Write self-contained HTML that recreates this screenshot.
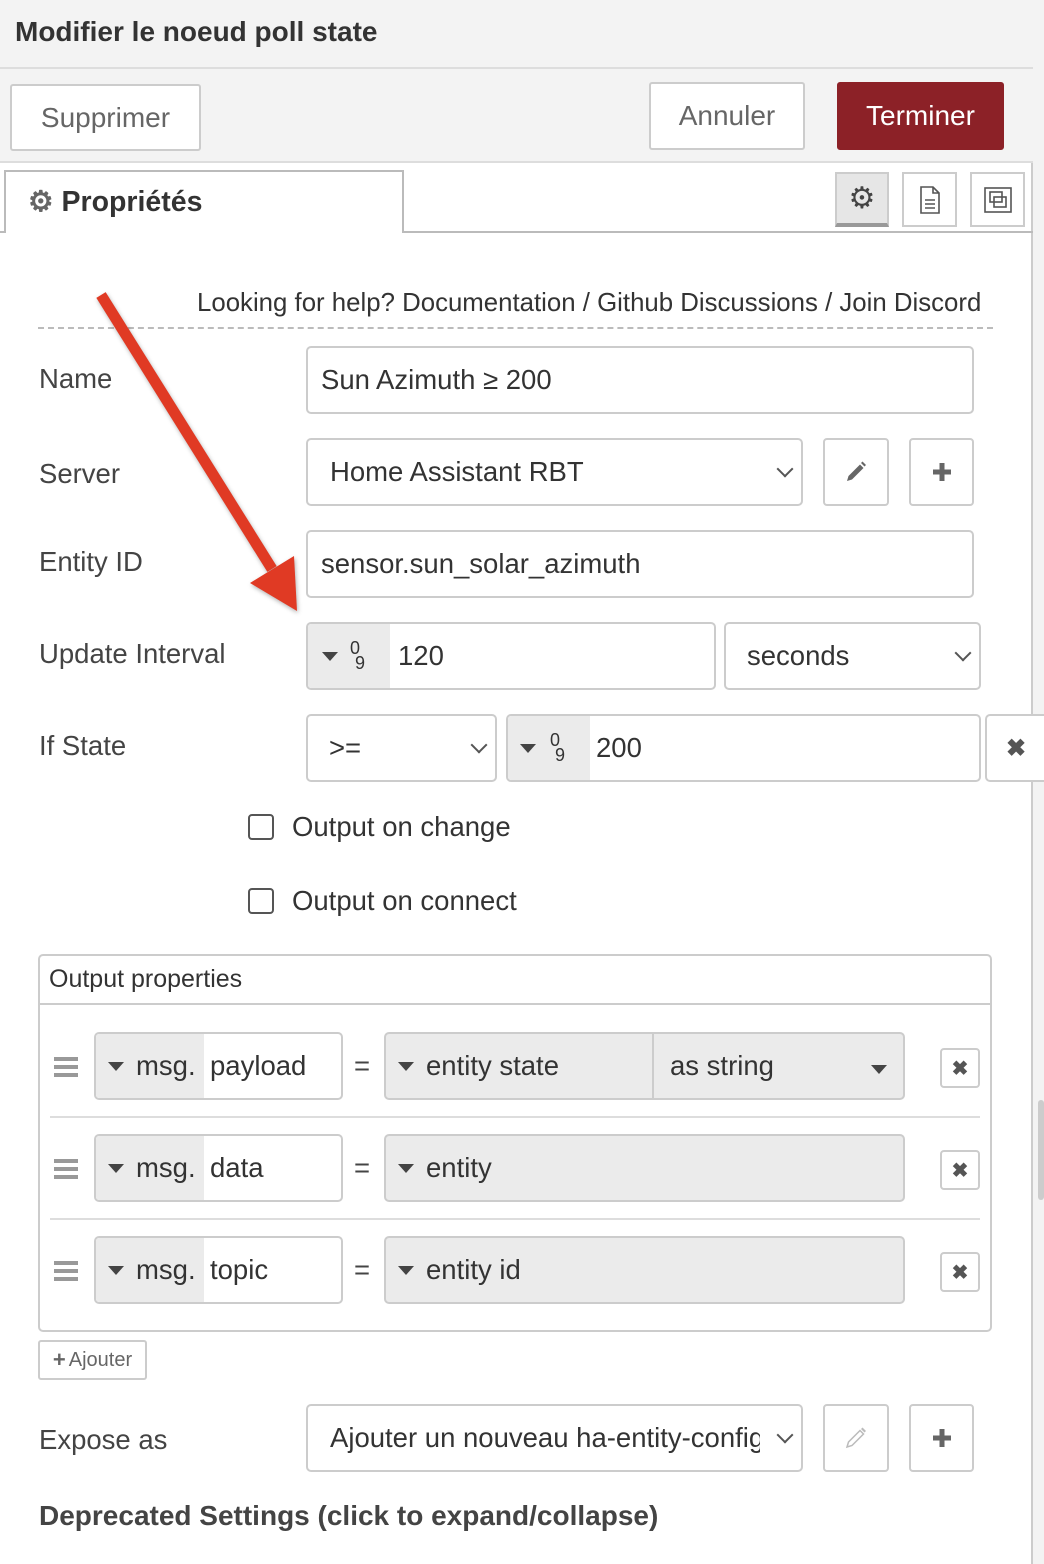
<!DOCTYPE html>
<html><head><meta charset="utf-8"><style>
*{box-sizing:border-box}
body{margin:0;width:1044px;height:1564px;overflow:hidden;background:#f3f3f3;font-family:"Liberation Sans",sans-serif;color:#444;position:relative}
.a{position:absolute}
.panel{left:0;top:0;width:1033px;height:1564px;background:#fff;border-right:2px solid #ccc}
.hdr{left:0;top:0;width:1033px;height:69px;background:#f3f3f3;border-bottom:2px solid #ddd}
.bar{left:0;top:69px;width:1033px;height:94px;background:#f3f3f3;border-bottom:2px solid #ddd}
.btn{border:2px solid #ccc;background:#fff;border-radius:3px;display:flex;align-items:center;justify-content:center;font-size:28px;color:#666}
.inp{border:2px solid #ccc;border-radius:5px;background:#fff;font-size:27.5px;color:#333;display:flex;align-items:center}
.lbl{font-size:27.5px;color:#444}
.sq{border:2px solid #ccc;border-radius:4px;background:#fff;display:flex;align-items:center;justify-content:center}
.chev{position:absolute;right:10px;top:50%;width:12px;height:12px;border-right:2px solid #555;border-bottom:2px solid #555;transform:translateY(-75%) rotate(45deg)}
.tri{display:inline-block;width:0;height:0;border-left:8px solid transparent;border-right:8px solid transparent;border-top:9px solid #444}
.grey{background:#ebebeb}
.hamb{width:24px;height:20px;border-top:4px solid #999;border-bottom:4px solid #999;position:absolute}
.hamb:after{content:"";position:absolute;left:0;right:0;top:4px;height:4px;background:#999}
.x{font-size:20px;font-weight:bold;color:#555}
</style></head><body>
<div class="a panel"></div>
<div class="a hdr"><div class="a" style="left:15px;top:16px;font-size:28px;font-weight:bold;color:#333">Modifier le noeud poll state</div></div>
<div class="a bar"></div>
<div class="a btn" style="left:10px;top:84px;width:191px;height:67px">Supprimer</div>
<div class="a btn" style="left:649px;top:82px;width:156px;height:68px">Annuler</div>
<div class="a btn" style="left:837px;top:82px;width:167px;height:68px;background:#8c2127;border-color:#8c2127;color:#fff">Terminer</div>
<!-- tabs -->
<div class="a" style="left:0;top:231px;width:1033px;height:2px;background:#bbb"></div>
<div class="a" style="left:4px;top:170px;width:400px;height:63px;background:#fff;border:2px solid #bbb;border-bottom:none"></div>
<div class="a" style="left:28px;top:185px;font-size:28.5px;font-weight:bold;color:#333"><span style="color:#666">⚙</span> Propriétés</div>
<div class="a sq" style="left:835px;top:172px;width:54px;height:55px;background:#e6e6e6;border-bottom:4px solid #999;border-radius:0;font-size:30px;color:#444">⚙</div>
<div class="a sq" style="left:902px;top:172px;width:55px;height:55px;border-radius:0"><svg width="22" height="28" viewBox="0 0 22 28"><path d="M2 1h12l6 6v20H2z M14 1v6h6 M6 14h10M6 18h10M6 22h10" fill="none" stroke="#555" stroke-width="1.6"/></svg></div>
<div class="a sq" style="left:970px;top:172px;width:55px;height:55px;border-radius:0"><svg width="32" height="30" viewBox="0 0 32 30"><rect x="3" y="3" width="26" height="24" fill="none" stroke="#555" stroke-width="1.6"/><rect x="8" y="7" width="12" height="10" fill="none" stroke="#555" stroke-width="1.6"/><rect x="12" y="12" width="12" height="10" fill="none" stroke="#555" stroke-width="1.6"/></svg></div>
<!-- help -->
<div class="a" style="left:197px;top:289px;font-size:25.8px;color:#333">Looking for help? Documentation / Github Discussions / Join Discord</div>
<div class="a" style="left:38px;top:327px;width:955px;border-top:2px dashed #bbb"></div>
<!-- rows -->
<div class="a lbl" style="left:39px;top:363px">Name</div>
<div class="a inp" style="left:306px;top:346px;width:668px;height:68px;padding-left:13px">Sun Azimuth ≥ 200</div>
<div class="a lbl" style="left:39px;top:458px">Server</div>
<div class="a inp" style="left:306px;top:438px;width:497px;height:68px;padding-left:22px">Home Assistant RBT<span class="chev"></span></div>
<div class="a sq" style="left:823px;top:438px;width:66px;height:68px"><svg width="24" height="24" viewBox="0 0 24 24"><path d="M3 21l1.5-5L16 4.5l3.5 3.5L8 19.5z" fill="#666"/><path d="M17 3l1.5-1.5 3.5 3.5L20.5 6.5z" fill="#666"/></svg></div>
<div class="a sq" style="left:909px;top:438px;width:65px;height:68px"><svg width="22" height="22"><path d="M11 2v18M2 11h18" stroke="#666" stroke-width="5"/></svg></div>
<div class="a lbl" style="left:39px;top:546px">Entity ID</div>
<div class="a inp" style="left:306px;top:530px;width:668px;height:68px;padding-left:13px">sensor.sun_solar_azimuth</div>
<div class="a lbl" style="left:39px;top:638px">Update Interval</div>
<div class="a inp" style="left:306px;top:622px;width:410px;height:68px;overflow:hidden"><div class="grey" style="width:82px;height:100%;display:flex;align-items:center;padding-left:14px;gap:12px"><span class="tri"></span><span style="font-size:18px;line-height:15px">0<br>&nbsp;9</span></div><span style="margin-left:8px">120</span></div>
<div class="a inp" style="left:724px;top:622px;width:257px;height:68px;padding-left:21px">seconds<span class="chev"></span></div>
<div class="a lbl" style="left:39px;top:730px">If State</div>
<div class="a inp" style="left:306px;top:714px;width:191px;height:68px;padding-left:21px">&gt;=<span class="chev"></span></div>
<div class="a inp" style="left:506px;top:714px;width:475px;height:68px;overflow:hidden"><div class="grey" style="width:82px;height:100%;display:flex;align-items:center;padding-left:12px;gap:14px"><span class="tri"></span><span style="font-size:18px;line-height:15px">0<br>&nbsp;9</span></div><span style="margin-left:6px">200</span></div>
<div class="a inp" style="left:985px;top:714px;width:60px;height:68px;border-right:none;border-radius:5px 0 0 5px;justify-content:center"><span class="x" style="font-size:24px">✖</span></div>
<div class="a" style="left:248px;top:814px;width:26px;height:26px;border:2px solid #555;border-radius:4px"></div>
<div class="a lbl" style="left:292px;top:811px;color:#333">Output on change</div>
<div class="a" style="left:248px;top:888px;width:26px;height:26px;border:2px solid #555;border-radius:4px"></div>
<div class="a lbl" style="left:292px;top:885px;color:#333">Output on connect</div>
<!-- output props -->
<div class="a" style="left:38px;top:954px;width:954px;height:378px;border:2px solid #ccc;border-radius:5px"></div>
<div class="a" style="left:38px;top:1003px;width:954px;border-top:2px solid #ccc"></div>
<div class="a" style="left:49px;top:965px;font-size:25px;color:#333">Output properties</div>
<div class="a" style="left:50px;top:1116px;width:930px;border-top:2px solid #ddd"></div>
<div class="a" style="left:50px;top:1218px;width:930px;border-top:2px solid #ddd"></div>

<div class="a hamb" style="left:54px;top:1057px"></div>
<div class="a inp" style="left:94px;top:1032px;width:249px;height:68px;overflow:hidden"><div class="grey" style="width:108px;height:100%;display:flex;align-items:center;padding-left:12px;gap:12px"><span class="tri"></span>msg.</div><span style="margin-left:6px">payload</span></div>
<div class="a lbl" style="left:354px;top:1050px">=</div>
<div class="a inp grey" style="left:384px;top:1032px;width:521px;height:68px;padding-left:12px"><span class="tri"></span><span style="margin-left:12px">entity state</span><div style="position:absolute;left:266px;top:0;bottom:0;border-left:2px solid #ccc"></div><span style="position:absolute;left:284px">as string</span><span class="tri" style="position:absolute;right:16px;top:31px"></span></div>
<div class="a sq" style="left:940px;top:1048px;width:40px;height:40px"><span class="x">✖</span></div>

<div class="a hamb" style="left:54px;top:1159px"></div>
<div class="a inp" style="left:94px;top:1134px;width:249px;height:68px;overflow:hidden"><div class="grey" style="width:108px;height:100%;display:flex;align-items:center;padding-left:12px;gap:12px"><span class="tri"></span>msg.</div><span style="margin-left:6px">data</span></div>
<div class="a lbl" style="left:354px;top:1152px">=</div>
<div class="a inp grey" style="left:384px;top:1134px;width:521px;height:68px;padding-left:12px"><span class="tri"></span><span style="margin-left:12px">entity</span></div>
<div class="a sq" style="left:940px;top:1150px;width:40px;height:40px"><span class="x">✖</span></div>

<div class="a hamb" style="left:54px;top:1261px"></div>
<div class="a inp" style="left:94px;top:1236px;width:249px;height:68px;overflow:hidden"><div class="grey" style="width:108px;height:100%;display:flex;align-items:center;padding-left:12px;gap:12px"><span class="tri"></span>msg.</div><span style="margin-left:6px">topic</span></div>
<div class="a lbl" style="left:354px;top:1254px">=</div>
<div class="a inp grey" style="left:384px;top:1236px;width:521px;height:68px;padding-left:12px"><span class="tri"></span><span style="margin-left:12px">entity id</span></div>
<div class="a sq" style="left:940px;top:1252px;width:40px;height:40px"><span class="x">✖</span></div>

<div class="a sq" style="left:38px;top:1340px;width:109px;height:40px;font-size:20px;color:#666;border-radius:3px"><b style="font-size:22px;margin-right:3px">+</b>Ajouter</div>
<div class="a lbl" style="left:39px;top:1424px">Expose as</div>
<div class="a inp" style="left:306px;top:1404px;width:497px;height:68px;padding-left:22px;overflow:hidden;white-space:nowrap"><span style="width:430px;overflow:hidden;display:inline-block">Ajouter un nouveau ha-entity-config</span><span class="chev"></span></div>
<div class="a sq" style="left:823px;top:1404px;width:66px;height:68px"><svg width="24" height="24" viewBox="0 0 24 24"><path d="M3 21l1.5-5L16 4.5l3.5 3.5L8 19.5z" fill="none" stroke="#bbb" stroke-width="1.5"/><path d="M17 3l1.5-1.5 3.5 3.5L20.5 6.5z" fill="#bbb"/></svg></div>
<div class="a sq" style="left:909px;top:1404px;width:65px;height:68px"><svg width="22" height="22"><path d="M11 2v18M2 11h18" stroke="#666" stroke-width="5"/></svg></div>
<div class="a" style="left:39px;top:1500px;font-size:28px;font-weight:bold;color:#444">Deprecated Settings (click to expand/collapse)</div>
<div class="a" style="left:1038px;top:1100px;width:6px;height:100px;background:#ccc;border-radius:3px"></div>
<!-- arrow -->
<svg class="a" style="left:0;top:0" width="1044" height="700"><g style="filter:drop-shadow(1px 2px 2px rgba(0,0,0,.3))"><path d="M101 295L272 569" stroke="#e03a24" stroke-width="11" stroke-linecap="butt"/><polygon points="297,611 250,583 294,556" fill="#e03a24"/></g></svg>
</body></html>
